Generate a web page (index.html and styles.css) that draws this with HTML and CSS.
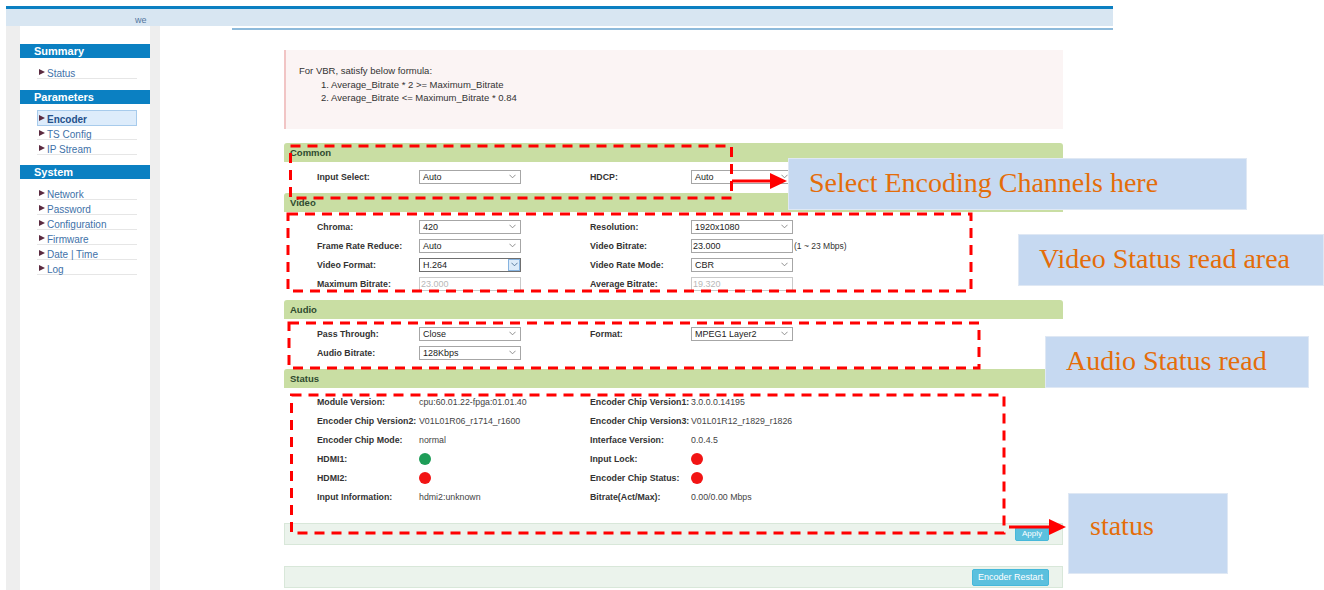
FILE: index.html
```html
<!DOCTYPE html>
<html lang="en">
<head>
<meta charset="utf-8">
<title>Encoder</title>
<link rel="stylesheet" href="styles.css">
</head>
<body>
<div class="page">
  <div class="topbar"><span class="welcome">we</span></div>
  <div class="layout">
    <aside class="sidebar">
      <div class="nav-title">Summary</div>
      <ul class="nav-list nav-first">
        <li>Status</li>
      </ul>
      <div class="nav-title">Parameters</div>
      <ul class="nav-list">
        <li class="active">Encoder</li>
        <li>TS Config</li>
        <li>IP Stream</li>
      </ul>
      <div class="nav-title">System</div>
      <ul class="nav-list">
        <li>Network</li>
        <li>Password</li>
        <li>Configuration</li>
        <li>Firmware</li>
        <li>Date | Time</li>
        <li>Log</li>
      </ul>
    </aside>

    <main class="main">
      <div class="main-rule"></div>
      <div class="content">
        <div class="notice">
          <div>For VBR, satisfy below formula:</div>
          <div class="rule">1. Average_Bitrate * 2 &gt;= Maximum_Bitrate</div>
          <div class="rule">2. Average_Bitrate &lt;= Maximum_Bitrate * 0.84</div>
        </div>

        <section class="panel">
          <div class="panel-head">Common</div>
          <div class="panel-body">
            <div class="row">
              <span class="lbl">Input Select:</span>
              <div class="select"><span>Auto</span><svg class="chev" viewBox="0 0 8 5"><path d="M0.5 0.5 L4 4 L7.5 0.5"/></svg></div>
              <span class="lbl">HDCP:</span>
              <div class="select"><span>Auto</span><svg class="chev" viewBox="0 0 8 5"><path d="M0.5 0.5 L4 4 L7.5 0.5"/></svg></div>
            </div>
          </div>
        </section>

        <section class="panel">
          <div class="panel-head">Video</div>
          <div class="panel-body">
            <div class="row">
              <span class="lbl">Chroma:</span>
              <div class="select"><span>420</span><svg class="chev" viewBox="0 0 8 5"><path d="M0.5 0.5 L4 4 L7.5 0.5"/></svg></div>
              <span class="lbl">Resolution:</span>
              <div class="select"><span>1920x1080</span><svg class="chev" viewBox="0 0 8 5"><path d="M0.5 0.5 L4 4 L7.5 0.5"/></svg></div>
            </div>
            <div class="row">
              <span class="lbl">Frame Rate Reduce:</span>
              <div class="select"><span>Auto</span><svg class="chev" viewBox="0 0 8 5"><path d="M0.5 0.5 L4 4 L7.5 0.5"/></svg></div>
              <span class="lbl">Video Bitrate:</span>
              <div class="with-unit"><div class="input">23.000</div><span class="unit">(1 ~ 23 Mbps)</span></div>
            </div>
            <div class="row">
              <span class="lbl">Video Format:</span>
              <div class="select focus"><span>H.264</span><span class="chev-box"><svg class="chev" viewBox="0 0 8 5"><path d="M0.5 0.5 L4 4 L7.5 0.5"/></svg></span></div>
              <span class="lbl">Video Rate Mode:</span>
              <div class="select"><span>CBR</span><svg class="chev" viewBox="0 0 8 5"><path d="M0.5 0.5 L4 4 L7.5 0.5"/></svg></div>
            </div>
            <div class="row">
              <span class="lbl">Maximum Bitrate:</span>
              <div class="input disabled">23.000</div>
              <span class="lbl">Average Bitrate:</span>
              <div class="input disabled">19.320</div>
            </div>
          </div>
        </section>

        <section class="panel">
          <div class="panel-head">Audio</div>
          <div class="panel-body">
            <div class="row">
              <span class="lbl">Pass Through:</span>
              <div class="select"><span>Close</span><svg class="chev" viewBox="0 0 8 5"><path d="M0.5 0.5 L4 4 L7.5 0.5"/></svg></div>
              <span class="lbl">Format:</span>
              <div class="select"><span>MPEG1 Layer2</span><svg class="chev" viewBox="0 0 8 5"><path d="M0.5 0.5 L4 4 L7.5 0.5"/></svg></div>
            </div>
            <div class="row">
              <span class="lbl">Audio Bitrate:</span>
              <div class="select"><span>128Kbps</span><svg class="chev" viewBox="0 0 8 5"><path d="M0.5 0.5 L4 4 L7.5 0.5"/></svg></div>
            </div>
          </div>
        </section>

        <section class="panel">
          <div class="panel-head">Status</div>
          <div class="panel-body status-body">
            <div class="row">
              <span class="lbl">Module Version:</span>
              <span class="val">cpu:60.01.22-fpga:01.01.40</span>
              <span class="lbl">Encoder Chip Version1:</span>
              <span class="val">3.0.0.0.14195</span>
            </div>
            <div class="row">
              <span class="lbl">Encoder Chip Version2:</span>
              <span class="val">V01L01R06_r1714_r1600</span>
              <span class="lbl">Encoder Chip Version3:</span>
              <span class="val">V01L01R12_r1829_r1826</span>
            </div>
            <div class="row">
              <span class="lbl">Encoder Chip Mode:</span>
              <span class="val">normal</span>
              <span class="lbl">Interface Version:</span>
              <span class="val">0.0.4.5</span>
            </div>
            <div class="row">
              <span class="lbl">HDMI1:</span>
              <span class="dot on"></span>
              <span class="lbl">Input Lock:</span>
              <span class="dot off"></span>
            </div>
            <div class="row">
              <span class="lbl">HDMI2:</span>
              <span class="dot off"></span>
              <span class="lbl">Encoder Chip Status:</span>
              <span class="dot off"></span>
            </div>
            <div class="row">
              <span class="lbl">Input Information:</span>
              <span class="val">hdmi2:unknown</span>
              <span class="lbl">Bitrate(Act/Max):</span>
              <span class="val">0.00/0.00 Mbps</span>
            </div>
          </div>
          <div class="panel-foot"><button class="btn">Apply</button></div>
        </section>

        <div class="panel-foot restart-bar"><button class="btn btn-lg">Encoder Restart</button></div>
      </div>
    </main>
  </div>
</div>

<!-- annotation layer: dashed outlines and pointer arrows -->
<svg class="marks" width="1324" height="590" viewBox="0 0 1324 590">
  <g class="dash">
    <rect x="290.5" y="146" width="441" height="52"/>
    <rect x="288" y="214" width="683" height="77"/>
    <rect x="289" y="323" width="690" height="45"/>
    <rect x="291.5" y="395" width="712.5" height="138"/>
  </g>
  <g class="arrow">
    <line x1="732" y1="181" x2="772" y2="181"/>
    <polygon points="770,173 787,181 770,189"/>
    <line x1="1009" y1="527" x2="1051" y2="527"/>
    <polygon points="1049,519 1066,527 1049,535"/>
  </g>
</svg>

<div class="callout c-common">Select Encoding Channels here</div>
<div class="callout c-video">Video Status read area</div>
<div class="callout c-audio">Audio Status read</div>
<div class="callout c-status">status</div>
</body>
</html>
```

FILE: styles.css
```css
* {
  box-sizing: border-box;
}

html,
body {
  margin: 0;
  padding: 0;
  background: #fff;
}

body {
  position: relative;
  width: 1324px;
  height: 590px;
  overflow: hidden;
  font-family: "Liberation Sans", Arial, sans-serif;
  color: #333;
}

/* ---------- frame ---------- */
.page {
  margin: 6px 0 0 6px;
  width: 1107px;
}

.topbar {
  height: 20px;
  border-top: 3px solid #0b7fc1;
  background: #d8e6f2;
  padding-left: 129px;
  font-size: 9px;
  line-height: 22px;
  color: #5476a0;
  overflow: hidden;
}

.layout {
  display: flex;
  height: 564px;
  padding-left: 14px;
  background: #eee;
}

/* ---------- sidebar ---------- */
.sidebar {
  flex: none;
  width: 130px;
  padding-top: 18px;
  background: #fff;
}

.nav-title {
  height: 14px;
  line-height: 14px;
  padding-left: 14px;
  background: #0b80c2;
  color: #fff;
  font-size: 11px;
  font-weight: bold;
}

.nav-list {
  list-style: none;
  margin: 0;
  padding: 6px 0 10px 17px;
}

.nav-first {
  padding-bottom: 11px;
}

.nav-list li {
  display: flex;
  align-items: center;
  width: 100px;
  height: 15px;
  padding: 4px 0 0 2px;
  border-bottom: 1px solid #e6e6e6;
  font-size: 10px;
  color: #4171a8;
}

.nav-list li::before {
  content: "";
  margin: -3px 2px 0 0;
  border-left: 6px solid #5b2b40;
  border-top: 3.5px solid transparent;
  border-bottom: 3.5px solid transparent;
}

.nav-list li.active {
  height: 16px;
  margin-bottom: -1px;
  padding: 3px 0 0 1px;
  background: #ddecfb;
  border: 1px solid #a7cbec;
  font-weight: bold;
  color: #24508a;
}

/* ---------- main ---------- */
.main {
  flex: 1;
  margin-left: 10px;
  padding-top: 2px;
  background: #fff;
}

.main-rule {
  margin-left: 72px;
  border-top: 2px solid #8dbadb;
}

.content {
  width: 779px;
  margin-left: 124px;
  padding-top: 20px;
}

.notice {
  height: 79px;
  padding: 14px 0 0 13px;
  border-left: 2px solid #f1c5c5;
  background: #fbf4f4;
  font-size: 9.5px;
  line-height: 13.5px;
  color: #333;
}

.notice .rule {
  padding-left: 22px;
}

.panel {
  margin-top: 14px;
}

.panel + .panel {
  margin-top: 0;
}

.panel-head {
  height: 19px;
  line-height: 19px;
  padding-left: 6px;
  border-radius: 3px 3px 0 0;
  background: #c9dea3;
  font-size: 9.5px;
  font-weight: bold;
  color: #2f4b2f;
}

.panel-body {
  padding: 5px 0 7px 33px;
}

.status-body {
  padding: 4px 0 17px 33px;
}

.row {
  display: grid;
  grid-template-columns: 102px 171px 101px 1fr;
  align-items: center;
  height: 19px;
  font-size: 9px;
}

.lbl {
  font-size: 8.8px;
  font-weight: bold;
  color: #333;
  white-space: nowrap;
}

.val {
  font-size: 8.8px;
  color: #444;
  white-space: nowrap;
}

/* form controls */
.select {
  display: flex;
  align-items: center;
  justify-content: space-between;
  width: 102px;
  height: 14px;
  padding: 0 4px 0 3px;
  border: 1px solid #a6a6a6;
  background: #fff;
  font-size: 9px;
  color: #222;
}

.chev {
  width: 7px;
  height: 5px;
  fill: none;
  stroke: #808080;
  stroke-width: 1;
}

.select.focus {
  padding-right: 0;
  border-color: #6f6f6f;
}

.chev-box {
  display: flex;
  align-items: center;
  justify-content: center;
  width: 12px;
  height: 12px;
  border: 1px solid #86b3e0;
  background: #dcebf9;
}

.chev-box .chev {
  stroke: #4c6f93;
}

.input {
  width: 102px;
  height: 14px;
  padding-left: 1px;
  border: 1px solid #a6a6a6;
  background: #fff;
  font-size: 9px;
  line-height: 12px;
  color: #222;
}

.input.disabled {
  border-color: #c9c9c9;
  color: #b8b8b8;
}

.with-unit {
  display: flex;
  align-items: center;
}

.unit {
  margin-left: 1px;
  font-size: 8.5px;
  color: #333;
  white-space: nowrap;
}

.dot {
  width: 12px;
  height: 12px;
  border-radius: 50%;
}

.dot.on {
  background: #1e9d58;
}

.dot.off {
  background: #f21414;
}

/* button bars */
.panel-foot {
  display: flex;
  align-items: center;
  justify-content: flex-end;
  height: 22px;
  padding-right: 13px;
  border: 1px solid #d8e7d9;
  background: #ebf3ec;
}

.restart-bar {
  margin-top: 21px;
}

.btn {
  height: 14px;
  padding: 0 6px;
  border: 1px solid #46b8da;
  border-radius: 2px;
  background: #5bc0de;
  color: #fff;
  font-family: "Liberation Sans", Arial, sans-serif;
  font-size: 8px;
  line-height: 12px;
}

.btn-lg {
  height: 17px;
  padding: 0 5px;
  font-size: 9px;
  line-height: 15px;
}

/* ---------- annotations ---------- */
.marks {
  position: absolute;
  left: 0;
  top: 0;
  pointer-events: none;
}

.dash rect {
  fill: none;
  stroke: #ff0000;
  stroke-width: 3;
  stroke-dasharray: 10 7;
}

.arrow line {
  stroke: #ff0000;
  stroke-width: 3;
}

.arrow polygon {
  fill: #ff0000;
}

.callout {
  position: absolute;
  display: flex;
  align-items: center;
  height: 52px;
  padding: 0 0 3px 20px;
  border: 1px solid #dfe8f4;
  background: #c6d9f1;
  font-family: "Liberation Serif", "Times New Roman", serif;
  font-size: 28px;
  line-height: 1;
  color: #e46d0a;
  white-space: nowrap;
}

.c-common {
  left: 788px;
  top: 158px;
  width: 459px;
}

.c-video {
  left: 1018px;
  top: 234px;
  width: 306px;
}

.c-audio {
  left: 1045px;
  top: 336px;
  width: 264px;
}

.c-status {
  left: 1068px;
  top: 493px;
  width: 160px;
  height: 81px;
  align-items: flex-start;
  padding: 18px 0 0 21px;
}
```
